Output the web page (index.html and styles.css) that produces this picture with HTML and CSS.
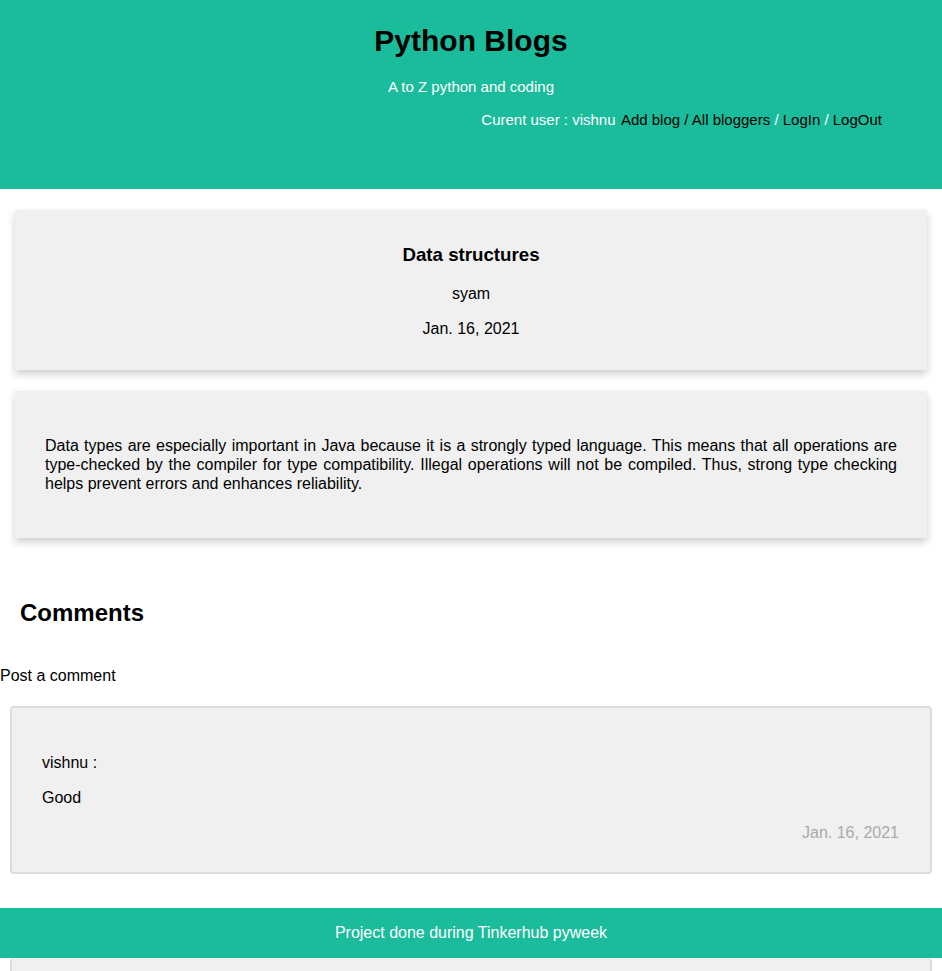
FILE: index.html
```html
<!DOCTYPE html>
<html>
<head>
<meta charset="utf-8">
<link rel="stylesheet" href="styles.css">
</head>
<body>
<header class="header">
  <h1 class="site-title">Python Blogs</h1>
  <p class="tagline">A to Z python and coding</p>
  <nav class="nav">
    <span class="light user">Curent user : vishnu</span> <a class="link">Add blog</a> / <a class="link">All bloggers</a> <span class="light">/</span> <a class="link">LogIn</a> <span class="light">/</span> <a class="link">LogOut</a>
  </nav>
</header>

<section class="card post-head">
  <h2 class="post-title">Data structures</h2>
  <p class="post-author">syam</p>
  <p class="post-date">Jan. 16, 2021</p>
</section>

<section class="card post-body">
  <p>Data types are especially important in Java because it is a strongly typed language. This means that all operations are type-checked by the compiler for type compatibility. Illegal operations will not be compiled. Thus, strong type checking helps prevent errors and enhances reliability.</p>
</section>

<h2 class="comments-title">Comments</h2>
<p class="post-comment">Post a comment</p>

<div class="comment">
  <p class="comment-user">vishnu :</p>
  <p class="comment-text">Good</p>
  <p class="comment-date">Jan. 16, 2021</p>
</div>

<footer class="footer">Project done during Tinkerhub pyweek</footer>

<div class="comment comment-next"></div>
</body>
</html>
```

FILE: styles.css
```css
html, body {
  margin: 0;
  padding: 0;
}
body {
  font-family: "Liberation Sans", Arial, sans-serif;
  font-size: 16px;
  color: #000;
  background: #fff;
}
p, h1, h2 {
  margin: 0;
}
.header {
  background: #1abc9c;
  height: 189px;
  box-sizing: border-box;
  padding-top: 23px;
  text-align: center;
}
.site-title {
  font-size: 30px;
  line-height: 35px;
  font-weight: bold;
}
.tagline {
  margin-top: 20px;
  line-height: 18px;
  font-size: 15px;
  color: #fff;
}
.nav {
  margin-top: 15px;
  line-height: 18px;
  font-size: 15px;
  text-align: right;
  padding-right: 60px;
  color: #000;
}
.light {
  color: #fff;
}
.user {
  margin-right: 2px;
}
.link {
  color: #000;
  text-decoration: none;
}
.card {
  background: #f0f0f0;
  margin: 21px 15px 0;
  box-shadow: 0 4px 8px 0 rgba(0, 0, 0, 0.2);
}
.post-head {
  padding: 34px 0 32px;
  text-align: center;
}
.post-title {
  font-size: 18.72px;
  line-height: 22px;
  font-weight: bold;
}
.post-author {
  margin-top: 19px;
  line-height: 18px;
}
.post-date {
  margin-top: 17px;
  line-height: 18px;
}
.post-body {
  padding: 45px 30px 45px;
  text-align: justify;
  line-height: 19px;
}
.comments-title {
  margin-top: 61px;
  padding-left: 20px;
  font-size: 24px;
  line-height: 28px;
  font-weight: bold;
}
.post-comment {
  margin-top: 40px;
  line-height: 18px;
}
.comment {
  margin: 21px 10px 0;
  background: #f0f0f0;
  border: 2px solid #dcdcdc;
  border-radius: 4px;
  padding: 46px 31px 30px 30px;
  line-height: 18px;
}
.comment-text {
  margin-top: 17px;
}
.comment-date {
  margin-top: 17px;
  text-align: right;
  color: #aaa;
}
.footer {
  margin-top: 34px;
  background: #1abc9c;
  color: #fff;
  height: 50px;
  line-height: 50px;
  text-align: center;
}
.comment-next {
  margin-top: 0;
  height: 60px;
  padding: 0;
  border-top: none;
}
```
